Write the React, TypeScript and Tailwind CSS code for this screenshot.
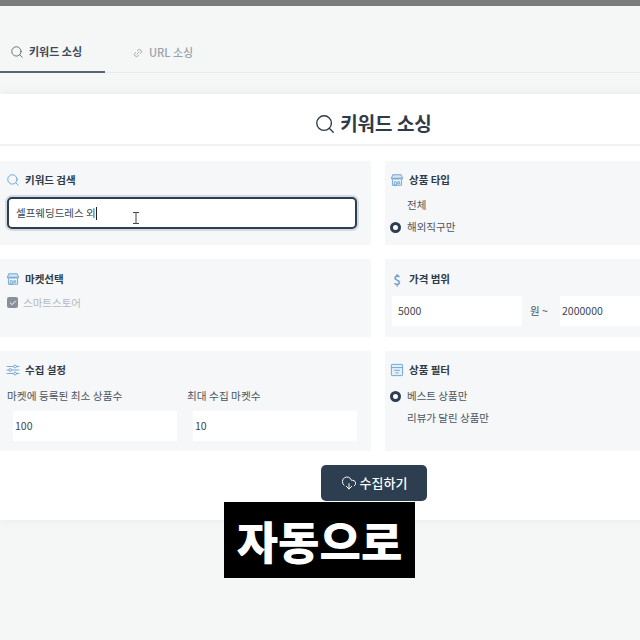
import { Search, Link2, Check, CloudDownload } from "lucide-react";
import type { ReactNode } from "react";

const font = "font-['Noto_Sans_CJK_KR','Noto_Sans',sans-serif]";

function StoreIcon({ className }: { className?: string }) {
  return (
    <svg viewBox="0 0 20 20" fill="none" stroke="currentColor" strokeWidth="1.2" className={className}>
      <path d="M4 2.500h12l2 5H2z" fill="#d3e4f3" />
      <path d="M2 7.500c0 2.400 3.600 2.400 4 0 .4 2.400 3.600 2.400 4 0 .4 2.400 3.600 2.400 4 0 .4 2.400 4 2.400 4 0" />
      <path d="M3.500 10v7.500h13V10" />
      <path d="M6 12.500h3v5H6zM11 12.500h3v3h-3z" />
    </svg>
  );
}

function SlidersIcon({ className }: { className?: string }) {
  return (
    <svg viewBox="0 0 20 20" fill="none" stroke="currentColor" strokeWidth="1.2" className={className}>
      <path d="M1 5h10M15 5h4M1 10h3M8 10h11M1 15h10M15 15h4" />
      <circle cx="13" cy="5" r="2" />
      <circle cx="6" cy="10" r="2" />
      <circle cx="13" cy="15" r="2" />
    </svg>
  );
}

function FilterIcon({ className }: { className?: string }) {
  return (
    <svg viewBox="0 0 20 20" fill="none" stroke="currentColor" strokeWidth="1.2" className={className}>
      <rect x="2" y="2" width="16" height="16" rx="1" fill="#e3eef7" />
      <path d="M2 6.500h16M6 10.500h8M8 14h4" />
    </svg>
  );
}

function Section({ icon, title, className, children }: { icon: ReactNode; title: string; className: string; children?: ReactNode }) {
  return (
    <div className={`bg-[#f5f7f8] ${className}`}>
      <div className="flex items-center h-5 gap-[5px] text-[10.5px] font-bold text-[#2f3b47]">
        <span className="w-[14px] flex justify-center text-[#5f9ccf]">{icon}</span>
        {title}
      </div>
      {children}
    </div>
  );
}

function Radio({ label, checked }: { label: string; checked?: boolean }) {
  return (
    <div className="flex items-center gap-[6px] h-[22px] text-[10.500px] text-[#4a5560]">
      <span className={checked ? "w-[11px] h-[11px] rounded-full border-[3px] border-[#2c3e50] bg-white" : "w-[11px] h-[11px]"} />
      {label}
    </div>
  );
}

function NumberBox({ value, className }: { value: string; className: string }) {
  return <div className={`bg-white h-[30px] flex items-center text-[10.5px] text-[#3c4650] ${className}`}>{value}</div>;
}

export default function App() {
  return (
    <div className={`${font} relative w-[640px] h-[640px] overflow-hidden bg-[#f5f7f7]`}>
      <div className="h-[6px] bg-[#7b7b7b]" />

      <div className="mt-[24px] h-[43px] flex border-b border-[#e8ebec]">
        <div className="w-[105px] h-[43px] border-b-2 border-[#5a6570] flex items-center pl-[10px] gap-[5px] pt-[2px] text-[11px] font-bold text-[#3d4955]">
          <Search size={14} strokeWidth={1.5} className="text-[#56616b]" />
          키워드 소싱
        </div>
        <div className="flex items-center pl-[28px] gap-[6px] h-[43px] pt-[2px] text-[11px] font-medium text-[#9aa2a9]">
          <Link2 size={10} className="-rotate-45" />
          URL 소싱
        </div>
      </div>

      <div className="mt-[21px] w-[746px] h-[426px] bg-white shadow-[0_0_10px_rgba(0,0,0,0.06)]">
        <div className="h-[52px] pt-[9px] border-b-2 border-[#f0f2f3] flex items-center justify-center gap-[4px] text-[19px] font-bold text-[#2f3b47]">
          <Search size={22} strokeWidth={1.5} />
          키워드 소싱
        </div>

        <div className="mt-[15px] grid grid-cols-[371px_361px] gap-x-[14px]">
          <Section title="키워드 검색" icon={<Search size={14} strokeWidth={1.5} />} className="relative h-[84px] pt-[9px] pl-[6px]">
            <div className="mt-[7px] ml-[1px] w-[350px] h-[32px] flex items-center pl-[7px] bg-white rounded-[5px] border-2 border-[#2c3e50] shadow-[0_0_0_2px_#d5dae0] text-[10.5px] text-[#3c4650]">
              셀프웨딩드레스 외
              <span className="w-px h-[13px] bg-[#222]" />
            </div>
            {/* mouse pointer from the recording */}
            <svg viewBox="0 0 8 12" fill="none" stroke="#444" strokeWidth="1" className="absolute left-[132px] top-[51px] w-[8px] h-[12px]">
              <path d="M1 .5h6M4 .5v11M1 11.500h6" />
            </svg>
          </Section>
          <Section title="상품 타입" icon={<StoreIcon className="w-[14px] h-[14px]" />} className="h-[84px] pt-[9px] pl-[5px]">
            <div className="mt-[4px]">
              <Radio label="전체" />
              <Radio label="해외직구만" checked />
            </div>
          </Section>

          <Section title="마켓선택" icon={<StoreIcon className="w-[14px] h-[14px]" />} className="mt-[14px] h-[78px] pt-[10px] pl-[6px]">
            <div className="mt-[6px] ml-[1px] flex items-center gap-[5px] text-[10.5px] text-[#b4b9be]">
              <span className="w-[11px] h-[11px] rounded-[2px] bg-[#8a9099] flex items-center justify-center">
                <Check size={8} strokeWidth={3} className="text-white" />
              </span>
              스마트스토어
            </div>
          </Section>
          <Section title="가격 범위" icon={<span className="text-[13px] font-medium leading-none">$</span>} className="mt-[14px] h-[78px] pt-[10px] pl-[5px]">
            <div className="mt-[7px] ml-[2px] flex items-center text-[10.5px] text-[#4a5560]">
              <NumberBox value="5000" className="w-[130px] pl-[6px]" />
              <span className="ml-[8px] w-[30px]">원 ~</span>
              <NumberBox value="2000000" className="w-[120px] pl-[2px]" />
            </div>
          </Section>

          <Section title="수집 설정" icon={<SlidersIcon className="w-[14px] h-[14px]" />} className="mt-[14px] h-[100px] pt-[9px] pl-[6px]">
            <div className="mt-[8px] ml-[1px] grid grid-cols-[180px_170px] text-[10.7px] text-[#4a5560]">
              <div className="h-[16px]">마켓에 등록된 최소 상품수</div>
              <div className="h-[16px]">최대 수집 마켓수</div>
              <NumberBox value="100" className="mt-[7px] ml-[6px] w-[164px] pl-[2px]" />
              <NumberBox value="10" className="mt-[7px] ml-[6px] w-[164px] pl-[2px]" />
            </div>
          </Section>
          <Section title="상품 필터" icon={<FilterIcon className="w-[14px] h-[14px]" />} className="mt-[14px] h-[100px] pt-[9px] pl-[5px]">
            <div className="mt-[5px]">
              <Radio label="베스트 상품만" checked />
              <Radio label="리뷰가 달린 상품만" />
            </div>
          </Section>
        </div>

        <div className="mt-[14px] flex justify-center pl-[2px]">
          <div className="w-[106px] h-[36px] rounded-[5px] bg-[#2c3e50] flex items-center justify-center gap-[3px] text-[13px] font-medium text-white">
            <CloudDownload size={16} strokeWidth={1.5} />
            수집하기
          </div>
        </div>
      </div>

      {/* caption burned into the recording */}
      <div className="absolute left-[224px] top-[502px] w-[191px] h-[76px] bg-black flex items-center justify-center text-[45px] leading-none font-black text-white">
        자동으로
      </div>
    </div>
  );
}
